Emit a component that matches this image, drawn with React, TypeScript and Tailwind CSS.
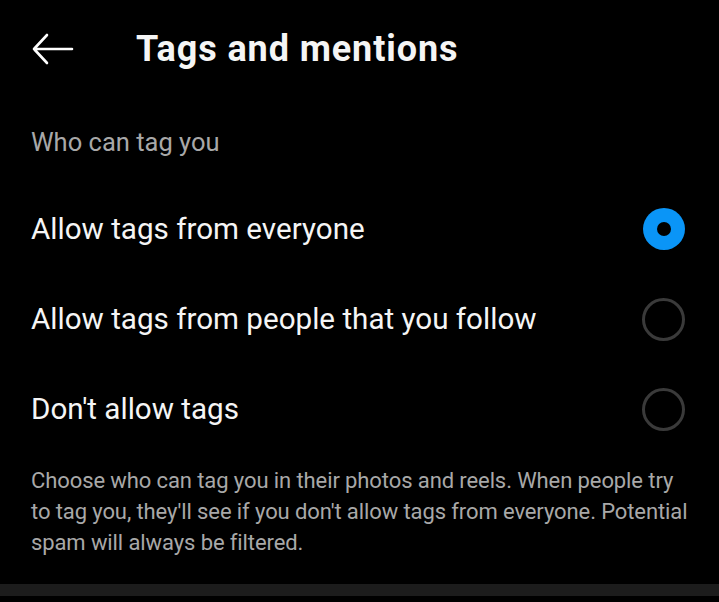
import React, { useState } from 'react';

const options = [
  'Allow tags from everyone',
  'Allow tags from people that you follow',
  "Don't allow tags",
];

const Radio: React.FC<{ checked: boolean }> = ({ checked }) =>
  checked ? (
    <span className="w-[42px] h-[42px] rounded-full bg-[#0a95f7] flex items-center justify-center">
      <span className="w-[14px] h-[14px] rounded-full bg-black" />
    </span>
  ) : (
    <span className="w-[43px] h-[43px] rounded-full border-[3px] border-[#3a3a3a]" />
  );

const App: React.FC = () => {
  const [selected, setSelected] = useState(0);

  return (
    <div
      className="w-[719px] h-[602px] bg-black text-white flex flex-col overflow-hidden"
      style={{ fontFamily: 'Roboto, "Noto Sans", sans-serif' }}
    >
      {/* Header */}
      <div className="h-[100px] flex items-center pl-[32px] pb-[2px]">
        <svg width="42" height="32" viewBox="0 0 42 32" fill="none" stroke="white" strokeWidth="2.6" strokeLinecap="round" strokeLinejoin="round">
          <path d="M40 16H2M15 2L2 16l13 14" />
        </svg>
        <h1 className="ml-[62px] text-[36px] font-bold tracking-[0.9px] text-[#f5f5f5]">Tags and mentions</h1>
      </div>

      <div className="pl-[31px] pr-[34px]">
        <p className="text-[25.5px] text-[#a8a8a8] mt-[20px] leading-[44px]">Who can tag you</p>

        <div className="mt-[20px] flex flex-col">
          {options.map((label, i) => (
            <button
              key={label}
              onClick={() => setSelected(i)}
              className="h-[90px] flex items-center justify-between text-left"
            >
              <span className="text-[29.6px] text-[#f5f5f5]">{label}</span>
              <Radio checked={selected === i} />
            </button>
          ))}
        </div>

        <p className="mt-[11px] text-[22px] leading-[31px] text-[#a8a8a8] tracking-[-0.1px] whitespace-nowrap">
          Choose who can tag you in their photos and reels. When people try
          <br />
          to tag you, they'll see if you don't allow tags from everyone. Potential
          <br />
          spam will always be filtered.
        </p>
      </div>

      <div className="mt-auto mb-[6px] h-[12px] bg-[#1c1c1c]" />
    </div>
  );
};

export default App;
